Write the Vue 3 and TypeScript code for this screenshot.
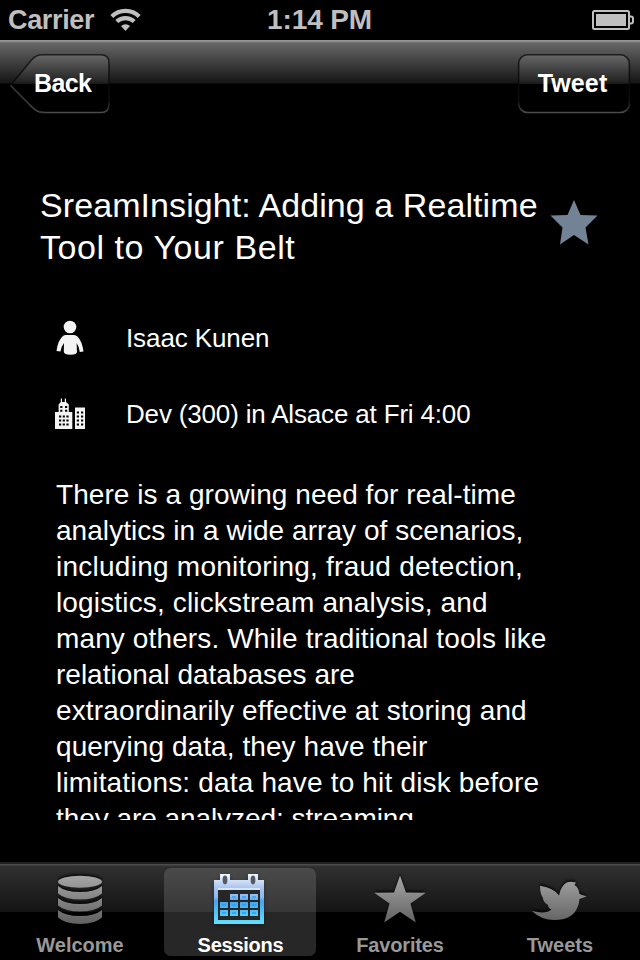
<script setup lang="ts">
import { computed, ref } from 'vue'

type TabId = 'welcome' | 'sessions' | 'favorites' | 'tweets'

interface Tab {
  id: TabId
  label: string
}

interface Line {
  text: string
  tracking: number
}

const tabs: Tab[] = [
  { id: 'welcome', label: 'Welcome' },
  { id: 'sessions', label: 'Sessions' },
  { id: 'favorites', label: 'Favorites' },
  { id: 'tweets', label: 'Tweets' },
]
const active = ref<TabId>('sessions')

const titleLines: Line[] = [
  { text: 'SreamInsight: Adding a Realtime', tracking: 0.08 },
  { text: 'Tool to Your Belt', tracking: 0.56 },
]
const bodyLines: Line[] = [
  { text: 'There is a growing need for real-time', tracking: 0.06 },
  { text: 'analytics in a wide array of scenarios,', tracking: 0.05 },
  { text: 'including monitoring, fraud detection,', tracking: 0.25 },
  { text: 'logistics, clickstream analysis, and', tracking: 0.15 },
  { text: 'many others. While traditional tools like', tracking: 0.12 },
  { text: 'relational databases are', tracking: 0 },
  { text: 'extraordinarily effective at storing and', tracking: 0.15 },
  { text: 'querying data, they have their', tracking: 0.08 },
  { text: 'limitations: data have to hit disk before', tracking: 0.17 },
  { text: 'they are analyzed; streaming', tracking: -0.06 },
]

const trackingStyle = (line: Line) => ({ letterSpacing: `${line.tracking}px` })

interface Cell {
  x: number
  y: number
}
const cells = computed<Cell[]>(() => {
  const out: Cell[] = []
  for (let row = 0; row < 3; row++) {
    for (let col = 0; col < 4; col++) {
      if (row === 0 && col === 0) continue
      out.push({ x: 56 + col * 10, y: 26 + row * 8 })
    }
  }
  return out
})
</script>

<template>
  <div class="screen">
    <header class="status">
      <div class="carrier">
        <span>Carrier</span>
        <svg class="wifi" width="32" height="24" viewBox="0 0 32 24">
          <path d="M1.8 8.4 A19.5 19.5 0 0 1 29.2 8.4" />
          <path d="M6.8 13.6 A12.6 12.6 0 0 1 24.2 13.6" />
          <path class="dot" d="M15.5 23 L11 18 A6.6 6.6 0 0 1 20 18 Z" />
        </svg>
      </div>
      <span class="clock">1:14 PM</span>
      <svg class="battery" width="44" height="22" viewBox="0 0 44 22">
        <rect x="2" y="2" width="36" height="18" rx="1.5" />
        <rect class="level" x="5" y="5" width="30" height="12" />
        <path d="M38 7.5 H40 Q42 7.5 42 9.5 V12.5 Q42 14.5 40 14.5 H38" />
      </svg>
    </header>

    <nav class="navbar">
      <button class="nav-button" type="button">
        <svg class="shape" width="104" height="62" viewBox="0 0 104 62">
          <defs>
            <linearGradient id="buttonFill" gradientUnits="userSpaceOnUse" x1="0" y1="0" x2="0" y2="62">
              <stop offset="0" stop-color="#6c6c6c" />
              <stop offset=".49" stop-color="#1e1e1e" />
              <stop offset=".5" stop-color="#000" />
              <stop offset="1" stop-color="#000" />
            </linearGradient>
            <linearGradient id="buttonEdge" gradientUnits="userSpaceOnUse" x1="0" y1="0" x2="0" y2="62">
              <stop offset="0" stop-color="#1e1e1e" />
              <stop offset=".46" stop-color="#0c0c0c" />
              <stop offset=".54" stop-color="#080808" />
              <stop offset=".78" stop-color="#101010" />
              <stop offset="1" stop-color="#585858" />
            </linearGradient>
          </defs>
          <path
            d="M33 1.8 H92 Q100 1.8 100 9.8 V51.5 Q100 59.5 92 59.5 H35 Q28 59.5 23 54 L1.5 32.5 L22 7.5 Q27 1.8 33 1.8 Z"
            fill="url(#buttonFill)"
            stroke="url(#buttonEdge)"
            stroke-width="1.6"
          />
          <path class="tip" d="M1.5 32.5 L23 54 Q28 59.5 35 59.5" />
        </svg>
        <span class="label back-label">Back</span>
      </button>
      <button class="nav-button" type="button">
        <svg class="shape" width="114" height="62" viewBox="0 0 114 62">
          <rect
            x="1.6"
            y="1.8"
            width="110.8"
            height="57.7"
            rx="9"
            fill="url(#buttonFill)"
            stroke="url(#buttonEdge)"
            stroke-width="1.6"
          />
        </svg>
        <span class="label tweet-label">Tweet</span>
      </button>
    </nav>

    <main class="content">
      <section class="heading">
        <h1 class="title">
          <span v-for="line in titleLines" :key="line.text" :style="trackingStyle(line)">{{ line.text }}</span>
        </h1>
        <svg class="fav" width="52" height="50" viewBox="0 0 52 50">
          <path d="M26 2 L32.5 17 L49.5 17.5 L37.5 29.5 L40.5 46.5 L26 37 L12 46.5 L14.5 29.5 L2.5 17.5 L19.5 17 Z" />
        </svg>
      </section>

      <div class="row speaker">
        <svg class="row-icon" width="32" height="38" viewBox="0 0 32 38">
          <circle cx="16" cy="8" r="6.3" />
          <path d="M9 17 Q10 16 12 16 H20 Q22 16 23.5 17.5 Q28 22 29.5 32.5 L25.8 33 Q25 27.5 22.6 24 L23 33 Q23 35.5 16.5 35.7 Q10 35.5 9.8 33 L10 24 Q7.5 27 6.5 32.5 L2.5 32 Q4 21 9 17 Z" />
        </svg>
        <span>Isaac Kunen</span>
      </div>
      <div class="row place">
        <svg class="row-icon" width="32" height="38" viewBox="0 0 32 38">
          <path
            fill-rule="evenodd"
            d="M6.8 3.5 h1.2 v3.5 h2.8 v-3.5 h1.2 v3.5 l2.8 2.5 v7.5 h3.5 v17 H1 v-17 h3.6 V9.5 l2.2 -2.5 Z
            M6.2 11 v2 h2.2 v-2 Z M11 11 v2 h2.2 v-2 Z M6.2 14.7 v2 h2.2 v-2 Z M11 14.7 v2 h2.2 v-2 Z
            M5 20.5 v2 h2.2 v-2 Z M8.7 20.5 v2 h2.2 v-2 Z M12.4 20.5 v2 h2.2 v-2 Z
            M5 24.5 v2 h2.2 v-2 Z M8.7 24.5 v2 h2.2 v-2 Z M12.4 24.5 v2 h2.2 v-2 Z
            M5 28.5 v2 h2.2 v-2 Z M8.7 28.5 v2 h2.2 v-2 Z M12.4 28.5 v2 h2.2 v-2 Z"
          />
          <path
            fill-rule="evenodd"
            d="M21 12.6 H31 V34 H21 Z
            M22.8 16.5 v2 h2.2 v-2 Z M27 16.5 v2 h2.2 v-2 Z M22.8 20.5 v2 h2.2 v-2 Z M27 20.5 v2 h2.2 v-2 Z
            M22.8 24.5 v2 h2.2 v-2 Z M27 24.5 v2 h2.2 v-2 Z M22.8 28.5 v2 h2.2 v-2 Z M27 28.5 v2 h2.2 v-2 Z"
          />
        </svg>
        <span>Dev (300) in Alsace at Fri 4:00</span>
      </div>

      <p class="body">
        <span v-for="line in bodyLines" :key="line.text" :style="trackingStyle(line)">{{ line.text }}</span>
      </p>
    </main>

    <footer class="tabbar">
      <button
        v-for="tab in tabs"
        :key="tab.id"
        type="button"
        class="tab"
        :class="[tab.id, { active: tab.id === active }]"
        @click="active = tab.id"
      >
        <svg class="tab-icon" width="152" height="60" viewBox="0 0 152 60">
          <defs>
            <linearGradient id="grey" gradientUnits="userSpaceOnUse" x1="0" y1="6" x2="0" y2="56">
              <stop offset="0" stop-color="#a8a8a8" />
              <stop offset="1" stop-color="#606060" />
            </linearGradient>
            <linearGradient id="frame" gradientUnits="userSpaceOnUse" x1="0" y1="6" x2="0" y2="56">
              <stop offset="0" stop-color="#f2f8fd" />
              <stop offset=".28" stop-color="#aac4ee" />
              <stop offset=".46" stop-color="#8abcf2" />
              <stop offset=".54" stop-color="#45a4ee" />
              <stop offset="1" stop-color="#62e0fc" />
            </linearGradient>
          </defs>
          <g v-if="tab.id === 'welcome'" fill="url(#grey)">
            <ellipse cx="76" cy="13.8" rx="22" ry="6" />
            <path d="M54 18 Q61 24 76 24 T98 18 V25.5 Q91 31.5 76 31.5 T54 25.5 Z" />
            <path d="M54 30 Q61 36 76 36 T98 30 V37.5 Q91 43.5 76 43.5 T54 37.5 Z" />
            <path d="M54 42 Q61 48 76 48 T98 42 V49.5 Q91 56 76 56 T54 49.5 Z" />
          </g>
          <g v-else-if="tab.id === 'sessions'">
            <rect class="well" x="53" y="21" width="44" height="32" />
            <path
              fill="url(#frame)"
              fill-rule="evenodd"
              d="M56 6 H66 V12 H84 V6 H94 V12 H100 V56 H50 V12 H56 Z M54 22 V52 H96 V22 Z"
            />
            <path class="lip" d="M54 21 H96" />
            <ellipse class="ring" cx="61" cy="12" rx="2.4" ry="4.4" />
            <ellipse class="ring" cx="89" cy="12" rx="2.4" ry="4.4" />
            <rect
              v-for="c in cells"
              :key="`${c.x}-${c.y}`"
              :x="c.x"
              :y="c.y"
              width="8"
              height="6"
              fill="url(#frame)"
            />
            <rect
              v-for="c in cells"
              :key="`in-${c.x}-${c.y}`"
              class="cell-core"
              :x="c.x + 2"
              :y="c.y + 2"
              width="4"
              height="2"
            />
          </g>
          <path
            v-else-if="tab.id === 'favorites'"
            fill="url(#grey)"
            d="M76 7.5 L82 24.5 L101.8 24.8 L86.5 35.5 L91.8 54.5 L76 43.8 L60.2 54.5 L65.5 35.5 L50.2 24.8 L70 24.5 Z"
          />
          <path
            v-else
            fill="url(#grey)"
            d="M48 43 Q62 46.5 67.5 41.5 Q64 40 64 37 Q59 34 59 30 Q56 26 56 17.8 Q70 20 75 27.5 Q78 13.5 87 13.7 L92 14.5 L90.5 17 Q94.5 19 95.5 26 L102.5 28.5 L95.5 31 Q94 47 80 51 Q60 55 48 43 Z"
          />
        </svg>
        <span class="tab-label">{{ tab.label }}</span>
      </button>
    </footer>
  </div>
</template>

<style>
body {
  margin: 0;
  background: #000;
}
</style>

<style scoped>
.screen {
  display: flex;
  flex-direction: column;
  width: 640px;
  height: 960px;
  overflow: hidden;
  background: #000;
  color: #fff;
  font-family: 'Liberation Sans', Arial, sans-serif;
}

button {
  margin: 0;
  padding: 0;
  border: 0;
  background: none;
  color: inherit;
  font: inherit;
}

svg {
  display: block;
}

.status {
  display: grid;
  grid-template-columns: 1fr auto 1fr;
  align-items: center;
  box-sizing: border-box;
  height: 40px;
  padding: 0 5px 0 8px;
  color: #bfbfbf;
  font-size: 27px;
  font-weight: bold;
  line-height: 40px;
}

.carrier {
  display: flex;
  align-items: center;
  gap: 16px;
  letter-spacing: -0.35px;
}

.wifi {
  fill: none;
  stroke: #bfbfbf;
  stroke-width: 4.2;
}

.wifi .dot {
  fill: #bfbfbf;
  stroke: none;
}

.clock {
  padding-right: 4px;
  font-size: 28px;
  letter-spacing: -0.15px;
}

.battery {
  justify-self: end;
  fill: none;
  stroke: #bfbfbf;
  stroke-width: 2;
}

.battery .level {
  fill: #bfbfbf;
  stroke: none;
}

.navbar {
  display: flex;
  justify-content: space-between;
  align-items: flex-start;
  box-sizing: border-box;
  height: 88px;
  padding: 13px 9px 0 9px;
  background: linear-gradient(#a0a0a0 0, #808080 2px, #666 3px, #151515 43px, #000 44px);
  font-size: 25px;
  font-weight: bold;
  text-shadow: 0 -2px 1px rgba(0, 0, 0, 0.6);
}

.nav-button {
  display: grid;
}

.shape,
.label {
  grid-area: 1 / 1;
}

.label {
  line-height: 60px;
}

.back-label {
  padding-left: 25px;
  letter-spacing: -0.6px;
  text-align: left;
}

.tweet-label {
  padding-right: 3px;
  letter-spacing: 0.15px;
}

.tip {
  fill: none;
  stroke: #3c3c3c;
  stroke-width: 1.4;
}

.content {
  height: 692px;
  overflow: hidden;
}

.heading {
  display: flex;
  align-items: flex-start;
  height: 172px;
  padding: 56px 40px 0;
  box-sizing: border-box;
}

.title {
  width: 509px;
  margin: 0;
  font-size: 34px;
  font-weight: normal;
  line-height: 42px;
  white-space: nowrap;
}

.title span,
.body span {
  display: block;
}

.fav {
  flex: none;
  margin-top: 14px;
  fill: #738396;
  filter: blur(0.5px);
}

.row {
  display: flex;
  align-items: center;
  gap: 40px;
  height: 76px;
  padding-left: 54px;
  font-size: 26px;
}

.speaker {
  letter-spacing: -0.1px;
}

.place {
  letter-spacing: -0.17px;
}

.row-icon {
  flex: none;
  fill: #f4f4f4;
}

.body {
  margin: 25px 0 0 56px;
  font-size: 28px;
  line-height: 36px;
  white-space: nowrap;
}

.tabbar {
  display: flex;
  justify-content: space-between;
  box-sizing: border-box;
  height: 98px;
  margin-top: 42px;
  padding: 4px 4px 0;
  border-top: 2px solid #202020;
  background: linear-gradient(#4c4c4c 0, #4c4c4c 1px, #303030 2px, #141414 48px, #000 48px);
}

.tab {
  width: 152px;
  height: 88px;
  border-radius: 7px;
  color: #999;
  font-size: 20px;
  font-weight: bold;
}

.tab-icon {
  filter: drop-shadow(0 -2px 1px rgba(0, 0, 0, 0.65));
}

.tab-label {
  display: block;
  line-height: 34px;
}

.favorites {
  letter-spacing: -0.15px;
}

.sessions {
  letter-spacing: -0.25px;
}

.sessions .tab-icon {
  filter: drop-shadow(0 2px 2px rgba(0, 0, 0, 0.4));
}

.sessions .tab-label {
  padding-left: 1px;
}

.tab.active {
  background: linear-gradient(#4a4a4a, #373737 44px, #272727 44px);
  color: #fff;
}

.well {
  fill: #262626;
}

.lip {
  stroke: #d6e6fa;
  stroke-width: 2;
}

.ring {
  fill: #555b65;
}

.cell-core {
  fill: #259cf2;
  opacity: 0.7;
}
</style>
